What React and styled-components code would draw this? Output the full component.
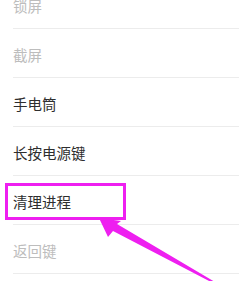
import React from 'react'
import styled, { createGlobalStyle } from 'styled-components'

const GlobalStyle = createGlobalStyle`
  html, body {
    margin: 0;
    padding: 0;
    background: #ffffff;
    overflow: hidden;
  }
  body {
    font-family: "Noto Sans CJK SC", "Noto Sans", sans-serif;
  }
`

const Page = styled.div`
  position: relative;
  width: 239px;
  height: 281px;
  overflow: hidden;
  background: #fff;
`

const List = styled.div`
  display: flex;
  flex-direction: column;
  margin-top: -20px;
  padding-left: 13px;
`

const Row = styled.div`
  display: flex;
  align-items: center;
  height: 49px;
  padding-top: 3px;
  box-sizing: border-box;
  border-bottom: 1px solid #ececec;
  font-size: 14.5px;
  color: ${p => (p.$disabled ? '#bdbdbd' : '#2e2e2e')};
`

const Highlight = styled.div`
  position: absolute;
  left: 5px;
  top: 183px;
  width: 121px;
  height: 37px;
  box-sizing: border-box;
  border: 3px solid #ee1ff0;
`

const Arrow = styled.svg`
  position: absolute;
  left: 0;
  top: 0;
`

const items = [
  { label: '锁屏', disabled: true },
  { label: '截屏', disabled: true },
  { label: '手电筒' },
  { label: '长按电源键' },
  { label: '清理进程' },
  { label: '返回键', disabled: true },
]

export default function App() {
  return (
    <>
      <GlobalStyle />
      <Page>
        <List>
          {items.map(item => (
            <Row key={item.label} $disabled={item.disabled}>{item.label}</Row>
          ))}
        </List>
        <Highlight />
        <Arrow width="239" height="281" viewBox="0 0 239 281">
          <polygon
            points="99,218 121,221 117,224 215,282 211,282 113,231 108,237"
            fill="#ee1ff0"
          />
        </Arrow>
      </Page>
    </>
  )
}
